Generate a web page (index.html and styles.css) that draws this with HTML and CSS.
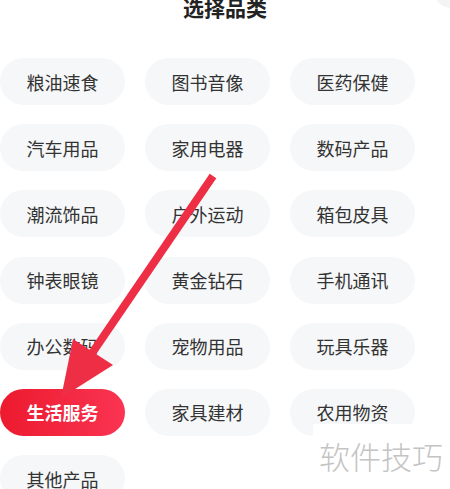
FILE: index.html
```html
<!DOCTYPE html>
<html lang="zh-CN">
<head>
    <meta charset="UTF-8">
    <meta name="viewport" content="width=device-width, initial-scale=1.0">
    <title>选择品类</title>
    <link rel="stylesheet" href="styles.css">
</head>
<body>
    <div class="sheet">
        <h1 class="sheet-title">选择品类</h1>
        <span class="close-btn"></span>

        <!-- 品类列表 -->
        <div class="category-grid">
            <button class="pill">粮油速食</button>
            <button class="pill">图书音像</button>
            <button class="pill">医药保健</button>
            <button class="pill">汽车用品</button>
            <button class="pill">家用电器</button>
            <button class="pill">数码产品</button>
            <button class="pill">潮流饰品</button>
            <button class="pill">户外运动</button>
            <button class="pill">箱包皮具</button>
            <button class="pill">钟表眼镜</button>
            <button class="pill">黄金钻石</button>
            <button class="pill">手机通讯</button>
            <button class="pill">办公数码</button>
            <button class="pill">宠物用品</button>
            <button class="pill">玩具乐器</button>
            <button class="pill active">生活服务</button>
            <button class="pill">家具建材</button>
            <button class="pill">农用物资</button>
            <button class="pill">其他产品</button>
        </div>

        <!-- 标注箭头 -->
        <svg class="arrow" width="450" height="489" viewBox="0 0 450 489">
            <line x1="213" y1="176" x2="86" y2="362" stroke="#ee2e44" stroke-width="8"/>
            <polygon points="73,339 113,365 61,398" fill="#ee2e44"/>
        </svg>

        <div class="watermark">软件技巧</div>
    </div>
</body>
</html>
```

FILE: styles.css
```css
body {
    margin: 0;
    padding: 0;
    background-color: #fff;
    font-family: "Noto Sans CJK SC", "Noto Sans", sans-serif;
    overflow: hidden;
}

.sheet {
    position: relative;
    width: 450px;
    height: 489px;
    overflow: hidden;
}

.sheet-title {
    margin: -4px 0 0;
    font-size: 21px;
    line-height: 22px;
    font-weight: 700;
    color: #222;
    text-align: center;
}

.close-btn {
    position: absolute;
    top: -26px;
    right: -18px;
    width: 34px;
    height: 34px;
    border-radius: 50%;
    background-color: #f4f4f5;
}

.category-grid {
    display: grid;
    grid-template-columns: repeat(3, 125px);
    column-gap: 20px;
    row-gap: 19.2px;
    margin-top: 40px;
}

.pill {
    height: 47px;
    padding: 0;
    border: none;
    border-radius: 24px;
    background-color: #f6f7f9;
    color: #333;
    font-family: inherit;
    font-size: 18px;
    cursor: pointer;
}

.pill.active {
    background: linear-gradient(90deg, #ec1a2e, #fa3452);
    color: #fff;
    font-weight: 700;
}

.arrow {
    position: absolute;
    left: 0;
    top: 0;
    pointer-events: none;
}

.watermark {
    position: absolute;
    left: 313px;
    top: 424px;
    width: 137px;
    height: 65px;
    padding: 12px 0 0 6px;
    box-sizing: border-box;
    background-color: #fff;
    color: #c4c4c4;
    font-size: 31px;
    font-weight: 300;
    line-height: 40px;
}
```
